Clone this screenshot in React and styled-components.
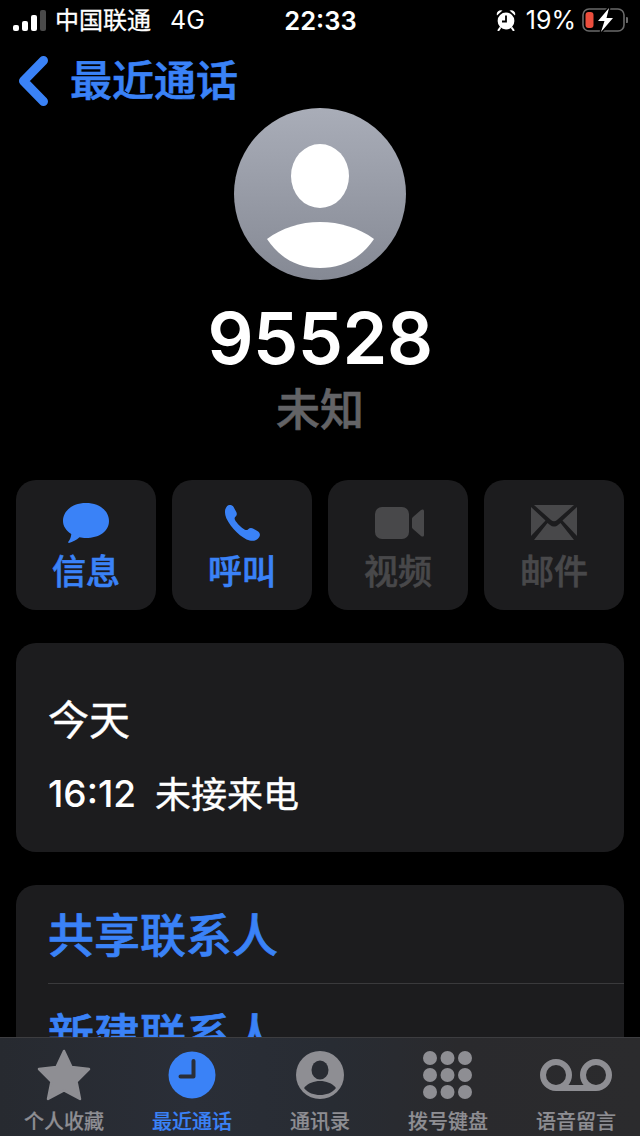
import React from "react";
import styled, { createGlobalStyle } from "styled-components";

const cjk = `"Noto Sans CJK SC", "Noto Sans", sans-serif`;
const latin = `Inter, "Noto Sans CJK SC", sans-serif`;
const blue = "#3a82f7";

const Global = createGlobalStyle`
  html, body { margin: 0; padding: 0; background: #000; }
  body { font-family: ${cjk}; }
`;

const Page = styled.div`
  position: relative;
  width: 640px;
  height: 1136px;
  overflow: hidden;
  background: #000;
  color: #fff;
`;

const StatusBar = styled.div`
  height: 40px;
  padding: 0 12px 0 13px;
  display: grid;
  grid-template-columns: 1fr auto 1fr;
  align-items: center;
  font-family: ${latin};
  font-size: 25px;
`;

const StatusLeft = styled.div`
  display: flex;
  align-items: center;
  gap: 9px;
`;

const Carrier = styled.span`
  margin-bottom: 3px;
  font-family: ${cjk};
  font-size: 24px;
  -webkit-text-stroke: 0.3px #fff;
`;

const Network = styled.span`
  margin-left: 10px;
  font-size: 25px;
`;

const Clock = styled.span`
  font-size: 25.5px;
  font-weight: 600;
`;

const StatusRight = styled.div`
  display: flex;
  align-items: center;
  justify-content: flex-end;
  gap: 6px;
`;

const AlarmSlot = styled.div`
  display: flex;
  margin-right: 4px;
`;

const Nav = styled.div`
  height: 68px;
  padding: 6px 0 0 18px;
  box-sizing: border-box;
  display: flex;
  align-items: center;
  gap: 20px;
  color: ${blue};
  font-size: 42px;
  font-weight: 500;
  -webkit-text-stroke: 0.7px ${blue};
`;

const Hero = styled.div`
  display: flex;
  flex-direction: column;
  align-items: center;
`;

const Avatar = styled.div`
  width: 172px;
  height: 172px;
  border-radius: 50%;
  overflow: hidden;
  background: linear-gradient(#a9adb8, #858994);
`;

const PhoneNumber = styled.div`
  margin-top: 16px;
  height: 84px;
  line-height: 84px;
  font-family: ${latin};
  font-size: 72px;
  font-weight: 600;
  letter-spacing: -0.5px;
`;

const Subtitle = styled.div`
  margin-top: 1px;
  height: 52px;
  line-height: 52px;
  font-size: 44px;
  font-weight: 500;
  color: #636366;
  -webkit-text-stroke: 0.6px #636366;
`;

const Actions = styled.div`
  margin-top: 47px;
  padding: 0 16px;
  display: grid;
  grid-template-columns: repeat(4, 140px);
  gap: 16px;
`;

const Action = styled.div`
  height: 130px;
  border-radius: 20px;
  background: #1c1c1e;
  display: flex;
  flex-direction: column;
  align-items: center;
  color: ${(p) => (p.$off ? "#48484a" : blue)};
  font-size: 34px;
  font-weight: 500;
  -webkit-text-stroke: 0.6px ${(p) => (p.$off ? "#48484a" : blue)};
`;

const ActionIcon = styled.div`
  margin-top: 21px;
  height: 44px;
  display: flex;
  align-items: center;
`;

const ActionLabel = styled.div`
  margin-top: 2px;
  line-height: 46px;
`;

const Card = styled.div`
  margin: ${(p) => p.$top}px 16px 0;
  border-radius: 20px;
  background: #1c1c1e;
`;

const History = styled(Card)`
  height: 209px;
  padding: 46px 32px 0;
  box-sizing: border-box;
  -webkit-text-stroke: 0.4px #fff;
`;

const Day = styled.div`
  font-size: 41px;
  line-height: 56px;
`;

const CallRow = styled.div`
  margin-top: 24px;
  display: flex;
  gap: 19px;
  font-size: 36px;
  line-height: 46px;
`;

const CallTime = styled.span`
  margin-top: 2px;
  font-family: ${latin};
  font-size: 37px;
  -webkit-text-stroke: 0;
  font-weight: 500;
`;

const OptionList = styled(Card)`
  padding-left: 32px;
`;

const Option = styled.div`
  height: 99px;
  padding-bottom: 4px;
  box-sizing: border-box;
  display: flex;
  align-items: center;
  color: ${blue};
  font-size: 46px;
  font-weight: 500;
  -webkit-text-stroke: 0.7px ${blue};
  border-bottom: ${(p) => (p.$line ? "1px solid #3a3a3c" : "0")};
`;

const TabBar = styled.div`
  position: absolute;
  left: 0;
  right: 0;
  bottom: 0;
  height: 99px;
  border-top: 1px solid #3d3d40;
  box-sizing: border-box;
  background: linear-gradient(90deg, #272a30 0%, #2a2e37 30%, #282c33 52%, #2a2a2d 72%, #2b2b2d 100%);
  display: grid;
  grid-template-columns: repeat(5, 128px);
`;

const Tab = styled.div`
  display: flex;
  flex-direction: column;
  align-items: center;
  color: ${(p) => (p.$active ? blue : "#8e8e93")};
  font-size: 20px;
  font-weight: 500;
  -webkit-text-stroke: 0.2px ${(p) => (p.$active ? blue : "#8e8e93")};
`;

const TabIcon = styled.div`
  margin-top: 13px;
  height: 48px;
  display: flex;
  align-items: center;
`;

const TabLabel = styled.div`
  margin-top: 10px;
  line-height: 24px;
  white-space: nowrap;
`;

const Signal = () => (
  <svg width="33" height="21" viewBox="0 0 33 21">
    <rect x="0" y="15" width="6" height="6" rx="2" fill="#fff" />
    <rect x="9" y="11" width="6" height="10" rx="2" fill="#fff" />
    <rect x="18" y="5" width="6" height="16" rx="2" fill="#fff" />
    <rect x="27" y="0" width="6" height="21" rx="2" fill="#4a4a4a" />
  </svg>
);

const Alarm = () => (
  <svg width="20" height="22" viewBox="0 0 20 22">
    <circle cx="10" cy="12" r="8.400" fill="#fff" />
    <path d="M1 6.500 A4 4 0 0 1 6.500 1.600 Z M19 6.500 A4 4 0 0 0 13.500 1.600 Z" fill="#fff" />
    <path d="M4 19 L2.500 21.300 M16 19 L17.500 21.300" stroke="#fff" strokeWidth="2" strokeLinecap="round" />
    <path d="M10 6.500 V12.500 H6" fill="none" stroke="#000" strokeWidth="1.800" />
  </svg>
);

const Battery = () => (
  <svg width="46" height="26" viewBox="0 0 46 26">
    <rect x="1" y="2" width="41" height="22" rx="6" fill="none" stroke="#6a6a6a" strokeWidth="1.600" />
    <rect x="3.500" y="5" width="8" height="16" rx="3" fill="#eb4e3d" />
    <path d="M44 10 a3 3 0 0 1 0 6 Z" fill="#6a6a6a" />
    <path d="M27 1 L16 14 H22.500 L19 25 L31 11 H24.500 Z" fill="#000" stroke="#000" strokeWidth="3" />
    <path d="M27 1 L16 14 H22.500 L19 25 L31 11 H24.500 Z" fill="#fff" />
  </svg>
);

const Back = () => (
  <svg width="32" height="58" viewBox="0 -8 32 58">
    <path d="M25.500 4.500 L5.500 25 L25.500 45.500" fill="none" stroke={blue} strokeWidth="9" strokeLinecap="round" strokeLinejoin="round" />
  </svg>
);

const Person = () => (
  <svg width="172" height="172" viewBox="0 0 172 172">
    <ellipse cx="86" cy="68" rx="29" ry="32" fill="#fff" />
    <path d="M33 131 C48 120 66 114 86 114 C106 114 125 120 140 131 C126 152 106 160 86 160 C66 160 47 152 33 131 Z" fill="#fff" />
  </svg>
);

const Bubble = () => (
  <svg width="48" height="42" viewBox="0 0 48 42">
    <path d="M24 1 C37 1 47 8.500 47 19 C47 29.500 37 36 24 36 C21.500 36 19.500 35.800 17.500 35.300 C14.500 38 10.500 40 7 41 C6 41 6 40 6.500 39.500 C8 37.500 9 35 9.300 32 C4 28.500 1 24 1 19 C1 8.500 11 1 24 1 Z" fill="currentColor" />
  </svg>
);

const Phone = () => (
  <svg width="38" height="38" viewBox="0 0 40 40">
    <path d="M4 2.500 C6 0.500 9.500 0.800 11 3 L14 8.500 C15 10.500 14.500 12 13 13.500 C12 14.500 12 15.500 12.800 17 C14.500 20 19 24.500 23 27 C24.500 27.800 25.500 27.600 26.500 26.500 C28 25 30 24.800 32 26 L37 29 C39 30.500 39.500 33 38 35 C36 38 32.500 39.500 28 38.500 C20 36.500 8 25 3.500 15 C1.500 10 1.500 5.500 4 2.500 Z" fill="currentColor" />
  </svg>
);

const Video = () => (
  <svg width="54" height="34" viewBox="-4 0 54 34">
    <rect x="0" y="1" width="34" height="32" rx="7" fill="currentColor" />
    <path d="M37 13 C37 12 37.500 11.500 38 11 L46 4 C47.500 2.800 49 3.500 49 5 V29 C49 30.500 47.500 31.200 46 30 L38 23 C37.500 22.500 37 22 37 21 Z" fill="currentColor" />
  </svg>
);

const Mail = () => (
  <svg width="46" height="36" viewBox="0 0 46 36">
    <path d="M3 0 H43 L26 15 C24 16.800 22 16.800 20 15 Z" fill="currentColor" />
    <path d="M0 2 L14.500 15.500 L0 31 Z M46 2 L31.500 15.500 L46 31 Z" fill="currentColor" />
    <path d="M3 35 L16.500 18 L19 20 C21.500 22 24.500 22 27 20 L29.500 18 L43 35 Z" fill="currentColor" />
  </svg>
);

const Star = () => (
  <svg width="54" height="52" viewBox="0 0 54 52">
    <path d="M27 2 L34.500 18 L52 20 L39.500 32.500 L43 50 L27 41.500 L11 50 L14.500 32.500 L2 20 L19.500 18 Z" fill="currentColor" stroke="currentColor" strokeWidth="2.500" strokeLinejoin="round" />
  </svg>
);

const ClockIcon = () => (
  <svg width="48" height="48" viewBox="0 0 48 48">
    <circle cx="24" cy="24" r="23.500" fill="currentColor" />
    <path d="M25.500 10 V25.500 H12.500" fill="none" stroke="#2a2e37" strokeWidth="4" strokeLinecap="round" strokeLinejoin="round" />
  </svg>
);

const Contact = () => (
  <svg width="48" height="48" viewBox="0 0 48 48">
    <circle cx="24" cy="24" r="24" fill="currentColor" />
    <ellipse cx="24" cy="19" rx="8.500" ry="9.500" fill="#292c33" />
    <path d="M8 37 C12 32 18 30 24 30 C30 30 36 32 40 37 C36 42 30 44 24 44 C18 44 12 42 8 37 Z" fill="#292c33" />
  </svg>
);

const Keypad = () => (
  <svg width="50" height="48" viewBox="0 0 50 48">
    {[7, 24.500, 42].map((x) =>
      [7, 24, 41].map((y) => <circle key={`${x}-${y}`} cx={x} cy={y} r="7" fill="currentColor" />)
    )}
  </svg>
);

const Voicemail = () => (
  <svg width="72" height="32" viewBox="0 0 72 32">
    <circle cx="16" cy="16" r="13" fill="none" stroke="currentColor" strokeWidth="6" />
    <circle cx="56" cy="16" r="13" fill="none" stroke="currentColor" strokeWidth="6" />
    <path d="M16 29 H56" stroke="currentColor" strokeWidth="6" />
  </svg>
);

const actions = [
  { label: "信息", icon: <Bubble /> },
  { label: "呼叫", icon: <Phone /> },
  { label: "视频", icon: <Video />, off: true },
  { label: "邮件", icon: <Mail />, off: true },
];

const tabs = [
  { label: "个人收藏", icon: <Star /> },
  { label: "最近通话", icon: <ClockIcon />, active: true },
  { label: "通讯录", icon: <Contact /> },
  { label: "拨号键盘", icon: <Keypad /> },
  { label: "语音留言", icon: <Voicemail /> },
];

export default function App() {
  return (
    <>
      <Global />
      <Page>
        <StatusBar>
          <StatusLeft>
            <Signal />
            <Carrier>中国联通</Carrier>
            <Network>4G</Network>
          </StatusLeft>
          <Clock>22:33</Clock>
          <StatusRight>
            <AlarmSlot>
              <Alarm />
            </AlarmSlot>
            <span>19%</span>
            <Battery />
          </StatusRight>
        </StatusBar>
        <Nav>
          <Back />
          最近通话
        </Nav>
        <Hero>
          <Avatar>
            <Person />
          </Avatar>
          <PhoneNumber>95528</PhoneNumber>
          <Subtitle>未知</Subtitle>
        </Hero>
        <Actions>
          {actions.map((a) => (
            <Action key={a.label} $off={a.off}>
              <ActionIcon>{a.icon}</ActionIcon>
              <ActionLabel>{a.label}</ActionLabel>
            </Action>
          ))}
        </Actions>
        <History $top={33}>
          <Day>今天</Day>
          <CallRow>
            <CallTime>16:12</CallTime>
            <span>未接来电</span>
          </CallRow>
        </History>
        <OptionList $top={33}>
          <Option $line>共享联系人</Option>
          <Option>新建联系人</Option>
        </OptionList>
        <TabBar>
          {tabs.map((t) => (
            <Tab key={t.label} $active={t.active}>
              <TabIcon>{t.icon}</TabIcon>
              <TabLabel>{t.label}</TabLabel>
            </Tab>
          ))}
        </TabBar>
      </Page>
    </>
  );
}
